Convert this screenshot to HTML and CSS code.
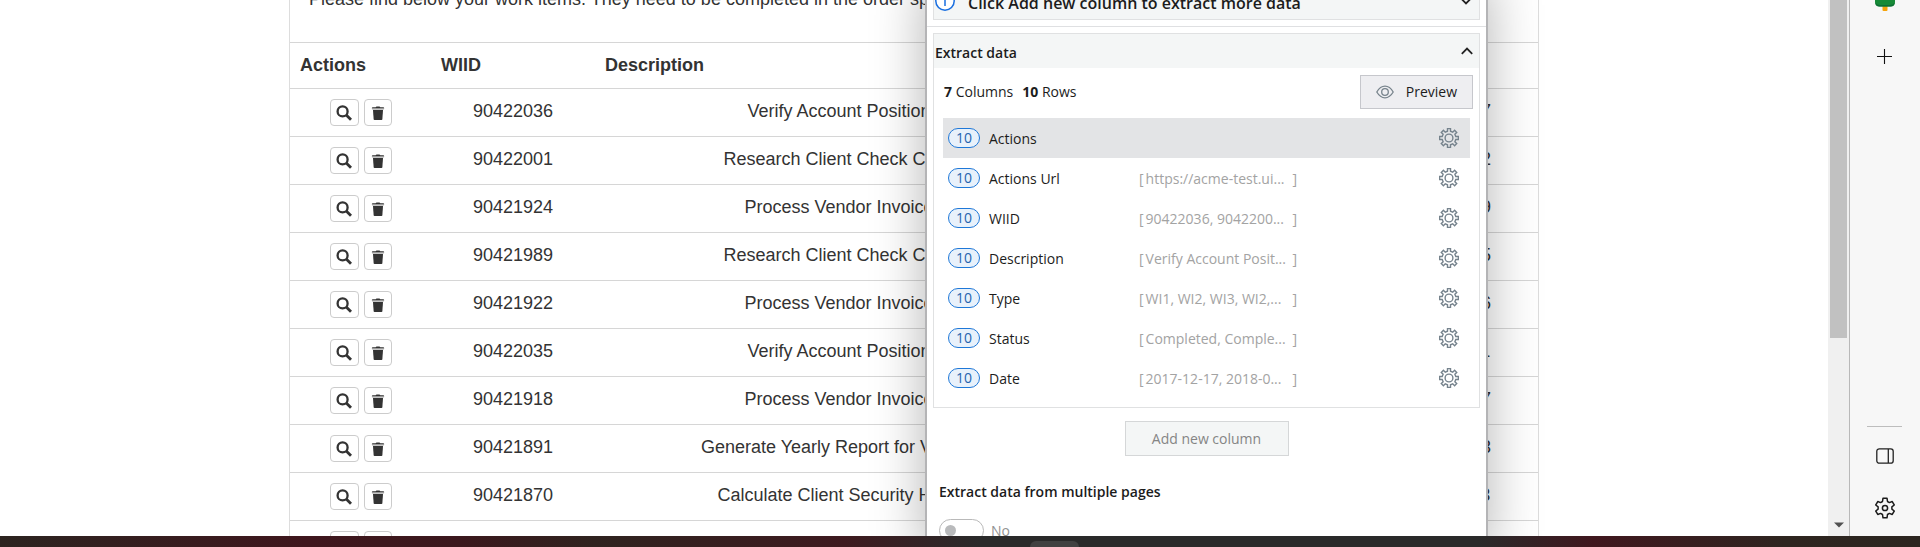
FILE: index.html
```html
<!DOCTYPE html>
<html lang="en">
<head>
<meta charset="utf-8">
<title>Work Items</title>
<link rel="stylesheet" href="styles.css">
</head>
<body>
<svg class="symbols" aria-hidden="true">
  <symbol id="search" viewBox="0 0 16 16"><circle cx="6.6" cy="6.4" r="5" fill="none" stroke="currentColor" stroke-width="2.3"/><path d="M10 9.800L15 14.800" stroke="currentColor" stroke-width="2.800"/></symbol>
  <symbol id="trash" viewBox="0 0 16 16"><path d="M1 2.2Q1 1.4 2 1.4H5.4Q5.7.6 6.5.6H9.5Q10.3.6 10.6 1.4H14Q15 1.4 15 2.2V2.8H1Z" fill="currentColor"/><path d="M1.5 3.6H14.5" stroke="#999" stroke-width="1"/><path d="M2.3 4.6H13.7L13 15.2Q12.9 16 12 16H4Q3.1 16 3 15.2Z" fill="currentColor"/></symbol>
  <symbol id="cog" viewBox="-10 -10 20 20"><path d="M-1.5-6.8V-9.4H1.5V-6.8L3.75-5.87 5.59-7.71 7.71-5.59 5.87-3.75 6.8-1.5H9.4V1.5H6.8L5.87 3.75 7.71 5.59 5.59 7.71 3.75 5.87 1.5 6.8V9.4H-1.5V6.8L-3.75 5.87-5.59 7.71-7.71 5.59-5.87 3.75-6.8 1.5H-9.4V-1.5H-6.8L-5.87-3.75-7.71-5.59-5.59-7.71-3.75-5.87Z" fill="none" stroke="currentColor" stroke-width="1.4"/><circle r="3.9" fill="none" stroke="currentColor" stroke-width="1.4"/></symbol>
</svg>

<div class="browser">
  <main class="page">
    <section class="panel">
      <p class="intro">Please find below your work items. They need to be completed in the order specified.</p>
      <table class="items">
        <colgroup><col class="c-actions"><col class="c-wiid"><col class="c-desc"><col class="c-type"><col class="c-status"><col class="c-date"></colgroup>
        <thead><tr><th>Actions</th><th>WIID</th><th>Description</th><th>Type</th><th>Status</th><th>Date</th></tr></thead>
        <tbody>
          <tr><td class="act"><button class="btn" aria-label="View"><svg><use href="#search"/></svg></button><button class="btn del" aria-label="Delete"><svg><use href="#trash"/></svg></button></td><td>90422036</td><td>Verify Account Position</td><td>WI1</td><td>Completed</td><td>2017-12-17</td></tr>
          <tr><td class="act"><button class="btn" aria-label="View"><svg><use href="#search"/></svg></button><button class="btn del" aria-label="Delete"><svg><use href="#trash"/></svg></button></td><td>90422001</td><td>Research Client Check Copy</td><td>WI2</td><td>Completed</td><td>2018-01-22</td></tr>
          <tr><td class="act"><button class="btn" aria-label="View"><svg><use href="#search"/></svg></button><button class="btn del" aria-label="Delete"><svg><use href="#trash"/></svg></button></td><td>90421924</td><td>Process Vendor Invoice</td><td>WI3</td><td>Completed</td><td>2018-03-09</td></tr>
          <tr><td class="act"><button class="btn" aria-label="View"><svg><use href="#search"/></svg></button><button class="btn del" aria-label="Delete"><svg><use href="#trash"/></svg></button></td><td>90421989</td><td>Research Client Check Copy</td><td>WI2</td><td>Completed</td><td>2017-05-15</td></tr>
          <tr><td class="act"><button class="btn" aria-label="View"><svg><use href="#search"/></svg></button><button class="btn del" aria-label="Delete"><svg><use href="#trash"/></svg></button></td><td>90421922</td><td>Process Vendor Invoice</td><td>WI3</td><td>Completed</td><td>2018-02-16</td></tr>
          <tr><td class="act"><button class="btn" aria-label="View"><svg><use href="#search"/></svg></button><button class="btn del" aria-label="Delete"><svg><use href="#trash"/></svg></button></td><td>90422035</td><td>Verify Account Position</td><td>WI1</td><td>Completed</td><td>2017-10-11</td></tr>
          <tr><td class="act"><button class="btn" aria-label="View"><svg><use href="#search"/></svg></button><button class="btn del" aria-label="Delete"><svg><use href="#trash"/></svg></button></td><td>90421918</td><td>Process Vendor Invoice</td><td>WI3</td><td>Completed</td><td>2017-09-27</td></tr>
          <tr><td class="act"><button class="btn" aria-label="View"><svg><use href="#search"/></svg></button><button class="btn del" aria-label="Delete"><svg><use href="#trash"/></svg></button></td><td>90421891</td><td>Generate Yearly Report for Vendor</td><td>WI4</td><td>Open</td><td>2018-04-03</td></tr>
          <tr><td class="act"><button class="btn" aria-label="View"><svg><use href="#search"/></svg></button><button class="btn del" aria-label="Delete"><svg><use href="#trash"/></svg></button></td><td>90421870</td><td>Calculate Client Security Hash</td><td>WI5</td><td>Open</td><td>2017-11-13</td></tr>
          <tr><td class="act"><button class="btn" aria-label="View"><svg><use href="#search"/></svg></button><button class="btn del" aria-label="Delete"><svg><use href="#trash"/></svg></button></td><td></td><td></td><td></td><td></td><td></td></tr>
        </tbody>
      </table>
    </section>
  </main>

  <div class="scrollbar">
    <div class="thumb"></div>
    <svg class="arrow" viewBox="0 0 10 6"><path d="M0 .5H10L5 5.5Z" fill="#505050"/></svg>
  </div>

  <aside class="sidebar">
    <svg class="tree" viewBox="0 0 20 11"><rect x="7.5" y="5" width="5" height="6" rx="1" fill="#f5a30a"/><path d="M0 0H20V2Q20 6.600 15.500 6.600H4.500Q0 6.600 0 2Z" fill="#178a37"/><path d="M.3 2.500Q1 6.600 4.500 6.600H15.500Q19 6.600 19.700 2.500Q18 5 15 5H5Q2 5 .3 2.500Z" fill="#0f6e35"/></svg>
    <button class="tool add" aria-label="Add"><svg width="15" height="15" viewBox="0 0 15 15"><path d="M0 7.500H15M7.500 0V15" stroke="#111" stroke-width="1.100"/></svg></button>
    <hr class="rule">
    <button class="tool" aria-label="Toggle sidebar"><svg width="18" height="16" viewBox="0 0 18 16"><rect x=".8" y=".8" width="16.400" height="14.400" rx="2.500" fill="none" stroke="#222" stroke-width="1.300"/><path d="M12.300 1V15" stroke="#222" stroke-width="1.300"/></svg></button>
    <button class="tool settings" aria-label="Settings"><svg width="22" height="22" viewBox="-11 -11 22 22"><path d="M-2.500-6.500L-2-9.800H2L2.500-6.500 4.380-5.420 7.230-6.480 9.230-3.020 6.880-1.090V1.090L9.230 3.020 7.230 6.480 4.380 5.420 2.500 6.500 2 9.800H-2L-2.500 6.500-4.380 5.420-7.230 6.480-9.230 3.020-6.880 1.090V-1.090L-9.230-3.020-7.230-6.480-4.380-5.420Z" fill="none" stroke="#1b1b1b" stroke-width="1.500" stroke-linejoin="round"/><circle r="2.600" fill="none" stroke="#1b1b1b" stroke-width="1.500"/></svg></button>
  </aside>

  <div class="dialog" role="dialog" aria-label="Extract data">
    <button class="hint">
      <svg class="info" viewBox="0 0 20 20"><circle cx="10" cy="10" r="9.200" fill="#fff" stroke="#1a6fe0" stroke-width="1.500"/><path d="M10 8.500V15M10 5V6.800" stroke="#1a6fe0" stroke-width="1.500"/></svg>
      <span>Click Add new column to extract more data</span>
      <svg class="chev" viewBox="0 0 12 8"><path d="M.8 1.200L6 6.400 11.200 1.200" fill="none" stroke="#222" stroke-width="1.800"/></svg>
    </button>
    <hr class="divider">
    <section class="extract">
      <button class="extract-head">
        <span>Extract data</span>
        <svg class="chev" viewBox="0 0 12 8"><path d="M.8 6.800L6 1.600 11.200 6.800" fill="none" stroke="#222" stroke-width="1.800"/></svg>
      </button>
      <div class="summary">
        <div class="counts"><span><b>7</b> Columns</span><span><b>10</b> Rows</span></div>
        <button class="preview"><svg width="18" height="14" viewBox="0 0 18 14"><path d="M.8 7Q4.200 1.200 9 1.200T17.200 7Q13.800 12.800 9 12.800T.8 7Z" fill="none" stroke="#77838c" stroke-width="1.300"/><circle cx="9" cy="7" r="3.300" fill="none" stroke="#77838c" stroke-width="1.300"/></svg>Preview</button>
      </div>
      <ul class="columns">
        <li class="selected"><span class="badge">10</span><span class="name">Actions</span><button class="cog" aria-label="Actions settings"><svg><use href="#cog"/></svg></button></li>
        <li><span class="badge">10</span><span class="name">Actions Url</span><span class="value"><i>[</i><span>https://acme-test.ui...</span><i>]</i></span><button class="cog" aria-label="Actions Url settings"><svg><use href="#cog"/></svg></button></li>
        <li><span class="badge">10</span><span class="name">WIID</span><span class="value"><i>[</i><span>90422036, 9042200...</span><i>]</i></span><button class="cog" aria-label="WIID settings"><svg><use href="#cog"/></svg></button></li>
        <li><span class="badge">10</span><span class="name">Description</span><span class="value"><i>[</i><span>Verify Account Posit...</span><i>]</i></span><button class="cog" aria-label="Description settings"><svg><use href="#cog"/></svg></button></li>
        <li><span class="badge">10</span><span class="name">Type</span><span class="value"><i>[</i><span>WI1, WI2, WI3, WI2,...</span><i>]</i></span><button class="cog" aria-label="Type settings"><svg><use href="#cog"/></svg></button></li>
        <li><span class="badge">10</span><span class="name">Status</span><span class="value"><i>[</i><span>Completed, Comple...</span><i>]</i></span><button class="cog" aria-label="Status settings"><svg><use href="#cog"/></svg></button></li>
        <li><span class="badge">10</span><span class="name">Date</span><span class="value"><i>[</i><span>2017-12-17, 2018-0...</span><i>]</i></span><button class="cog" aria-label="Date settings"><svg><use href="#cog"/></svg></button></li>
      </ul>
    </section>
    <button class="add-column">Add new column</button>
    <h2 class="multi">Extract data from multiple pages</h2>
    <label class="toggle"><input type="checkbox">No</label>
  </div>
</div>
<footer class="taskbar"><div class="task"></div></footer>
</body>
</html>
```

FILE: styles.css
```css
* { box-sizing: border-box; }

body {
  margin: 0;
  height: 100vh;
  display: flex;
  flex-direction: column;
  overflow: hidden;
  background: #fff;
  color: #333;
  font: 18px/26px "Liberation Sans", Arial, sans-serif;
}

button { padding: 0; border: 0; background: none; font: inherit; color: inherit; }
svg { display: block; flex: none; }
.symbols { position: absolute; width: 0; height: 0; }

.browser { position: relative; flex: 1; min-height: 0; display: flex; overflow: hidden; }

/* work items page */
.page { flex: 1; min-width: 0; overflow: hidden; }
.panel { max-width: 1250px; margin: -14px auto 0; border: 1px solid #ddd; border-top: 0; }
.intro { margin: 0; padding: 0 19px 30px; white-space: nowrap; overflow: hidden; }
.items { width: 100%; border-collapse: collapse; table-layout: fixed; }
.c-actions { width: 141px; }
.c-wiid { width: 164px; }
.c-desc { width: 488px; }
.c-type { width: 121px; }
.c-date { width: 186px; }
.items th, .items td { border-top: 1px solid #d6d6d6; vertical-align: top; }
.items th { height: 46px; padding: 9px 10px; text-align: left; }
.items td { height: 48px; padding: 9px 10px 0; text-align: center; white-space: nowrap; }
.items .act { padding-top: 10px; }
.btn {
  display: inline-flex;
  align-items: center;
  justify-content: center;
  width: 29px;
  height: 27px;
  border: 1px solid #ccc;
  border-radius: 4px;
  background: #fff;
  vertical-align: top;
}
.btn svg { width: 16px; height: 16px; }
.btn + .btn { width: 28px; margin-left: 5px; }
.del svg { width: 14px; height: 16px; }

/* scrollbar */
.scrollbar {
  width: 21px;
  display: flex;
  flex-direction: column;
  justify-content: space-between;
  align-items: center;
  padding-bottom: 8px;
  background: #f0f0f0;
}
.thumb { width: 17px; height: 64%; background: #c1c1c1; }
.arrow { width: 10px; height: 6px; }

/* browser sidebar */
.sidebar {
  width: 71px;
  display: flex;
  flex-direction: column;
  align-items: center;
  padding: 0 1px 17px 0;
  border-left: 1px solid #b8b8b8;
  background: #f7f7f7;
}
.tree { width: 20px; height: 11px; }
.add { margin-top: 38px; }
.rule { width: 35px; height: 1px; margin: auto 0 21px; border: 0; background: #bdbdbd; }
.settings { margin-top: 33px; }

/* extraction wizard window */
.dialog {
  position: absolute;
  top: -20px;
  bottom: -20px;
  left: 925px;
  width: 563px;
  display: flex;
  flex-direction: column;
  padding: 0 6px;
  border: 2px solid #b4b4b6;
  background: #fff;
  color: #1c1c1c;
  font: 14px/20px "Open Sans", "Noto Sans", sans-serif;
  box-shadow: 0 0 50px rgba(0, 0, 0, .3);
}
.hint {
  flex: none;
  display: flex;
  align-items: center;
  height: 38px;
  padding: 0 7px 0 1px;
  border: 1px solid #e0e1e2;
  background: #f4f6f6;
  font-size: 16px;
  font-weight: 600;
}
.hint span { margin-left: 13px; padding-top: 3px; }
.info { width: 20px; height: 20px; }
.chev { width: 12px; height: 8px; margin-left: auto; }
.divider { width: calc(100% + 12px); height: 1px; flex: none; margin: 6px -6px; border: 0; background: #dfe0e2; }
.extract { flex: none; padding-bottom: 9px; border: 1px solid #e0e1e2; }
.extract-head {
  display: flex;
  align-items: center;
  width: 100%;
  height: 34px;
  padding: 0 6px 0 1px;
  background: #f4f6f6;
  font-weight: 600;
}
.extract-head span { padding-top: 3px; }
.summary {
  display: flex;
  justify-content: space-between;
  align-items: center;
  height: 50px;
  padding: 0 6px 2px 10px;
}
.counts { display: flex; gap: 9px; }
.preview {
  display: flex;
  align-items: center;
  gap: 12px;
  height: 34px;
  padding: 0 15px;
  border: 1px solid #c6c7cc;
  background: #eeeef1;
}
.columns { margin: 0; padding: 0 9px; list-style: none; }
.columns li { display: flex; align-items: center; height: 40px; padding: 0 11px 0 5px; }
.selected { background: #e3e4e6; }
.badge {
  width: 32px;
  height: 20px;
  border: 1px solid #1f78d8;
  border-radius: 10px;
  background: #e8f1fb;
  color: #2563ae;
  line-height: 18px;
  text-align: center;
}
.name { width: 150px; margin-left: 9px; padding-top: 1px; }
.value { display: flex; width: 158px; padding-top: 1px; color: #a3a3a3; white-space: nowrap; }
.value span { flex: 1; margin-left: 2px; }
.value i { font-style: normal; }
.cog { margin-left: auto; color: #76838d; }
.cog svg { width: 20px; height: 20px; }
.add-column {
  flex: none;
  align-self: center;
  width: 164px;
  height: 35px;
  margin-top: 13px;
  border: 1px solid #d5d7d8;
  background: #f4f6f6;
  color: #858585;
}
.multi { margin: 26px 6px 17px; font-size: 14px; font-weight: 600; line-height: 20px; }
.toggle { display: flex; align-items: center; gap: 7px; margin-left: 6px; color: #929292; }
.toggle input {
  appearance: none;
  width: 45px;
  height: 23px;
  margin: 0;
  padding: 5px;
  border: 1px solid #b9b9b9;
  border-radius: 12px;
}
.toggle input::before { content: ""; display: block; width: 11px; height: 11px; border-radius: 50%; background: #b9babc; }

/* taskbar */
.taskbar {
  height: 11px;
  display: flex;
  padding: 5px 0 0 1030px;
  background: linear-gradient(90deg, #2c2420 0, #3f161d 16%, #3b181d 24%, #2f231f 31%, #3e1a1f 44%, #2a2a2a 51%, #2a2a2a 77%, #40171e 83%, #2e2520 93%, #2c2620 100%);
}
.task { width: 49px; border-radius: 6px 6px 0 0; background: #414141; }
```
